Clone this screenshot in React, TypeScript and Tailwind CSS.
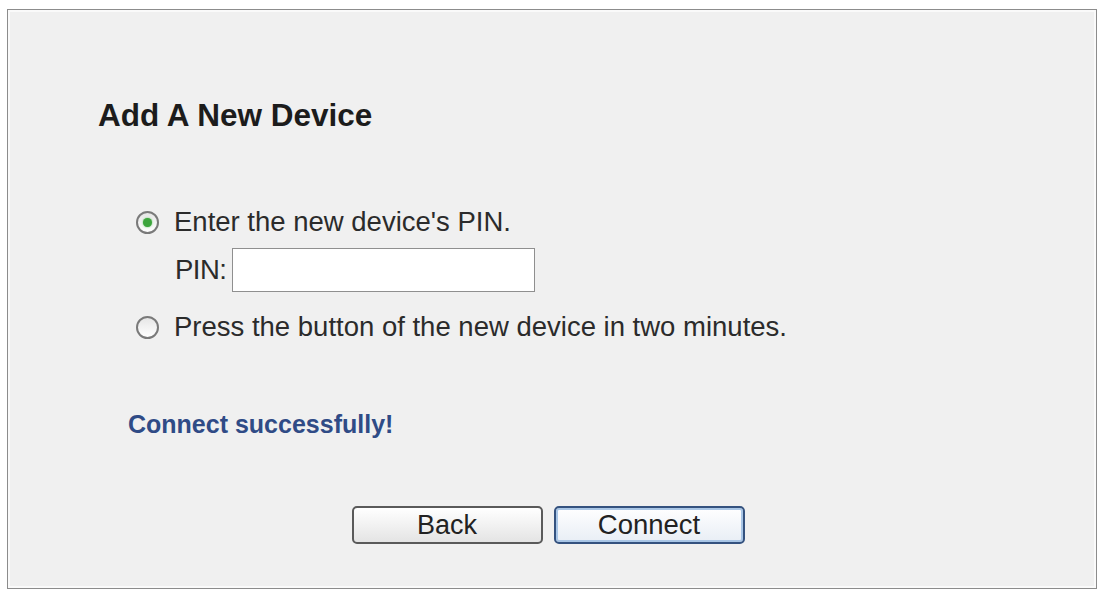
import { useState } from "react";

type Mode = "pin" | "pbc";

function Radio({ checked, onClick }: { checked: boolean; onClick: () => void }) {
  return (
    <button
      type="button"
      onClick={onClick}
      className="flex h-[23px] w-[23px] shrink-0 items-center justify-center rounded-full border-2 border-[#7a7a7a] bg-gradient-to-b from-[#e6e6e6] to-white"
    >
      {checked && <span className="h-[9px] w-[9px] rounded-full bg-[#3da53d] shadow-[0_0_2px_#5ec55e]" />}
    </button>
  );
}

export default function App() {
  const [mode, setMode] = useState<Mode>("pin");
  const [pin, setPin] = useState("");

  return (
    <div className="h-[592px] w-[1100px] bg-white pl-[7px] pt-[9px] font-['Liberation_Sans',Arial,sans-serif]">
      <div className="flex h-[580px] w-[1090px] flex-col border border-[#8c8c8c] bg-[#f0f0f0] pt-[87px] shadow-[inset_0_0_0_2px_#fafafa]">
        <h1 className="pl-[90px] text-[31.5px] font-bold leading-[36px] text-[#1c1c1c]">Add A New Device</h1>

        <div className="mt-[74px] flex flex-col pl-[128px] text-[27.5px] leading-[30px] text-[#2b2b2b]">
          <label className="flex items-center gap-[15px]">
            <Radio checked={mode === "pin"} onClick={() => setMode("pin")} />
            <span>Enter the new device's PIN.</span>
          </label>
          <div className="mt-[11px] flex items-center pl-[39px]">
            <span className="mr-[6px] tracking-[-0.5px]">PIN:</span>
            <input
              value={pin}
              onChange={(e) => setPin(e.target.value)}
              className="h-[44px] w-[303px] border border-[#8f8f8f] bg-white px-2 text-[22px] outline-none"
            />
          </div>
          <label className="mt-[20px] flex items-center gap-[15px]">
            <Radio checked={mode === "pbc"} onClick={() => setMode("pbc")} />
            <span>Press the button of the new device in two minutes.</span>
          </label>
        </div>

        <p className="mt-[67px] pl-[120px] text-[25px] font-bold leading-[30px] text-[#2f4b86]">Connect successfully!</p>

        <div className="mt-[67px] flex justify-center gap-[11px] pr-[8px]">
          <button
            type="button"
            className="h-[38px] w-[191px] rounded-[5px] border-2 border-[#5a5a5a] bg-gradient-to-b from-white to-[#e4e4e4] text-[27px] leading-none text-[#222]"
          >
            Back
          </button>
          <button
            type="button"
            className="h-[38px] w-[191px] rounded-[5px] border-2 border-[#34527f] bg-gradient-to-b from-white to-[#e8eef5] text-[27.5px] leading-none text-[#222] shadow-[inset_0_0_0_2px_#a9c6e6]"
          >
            Connect
          </button>
        </div>
      </div>
    </div>
  );
}
